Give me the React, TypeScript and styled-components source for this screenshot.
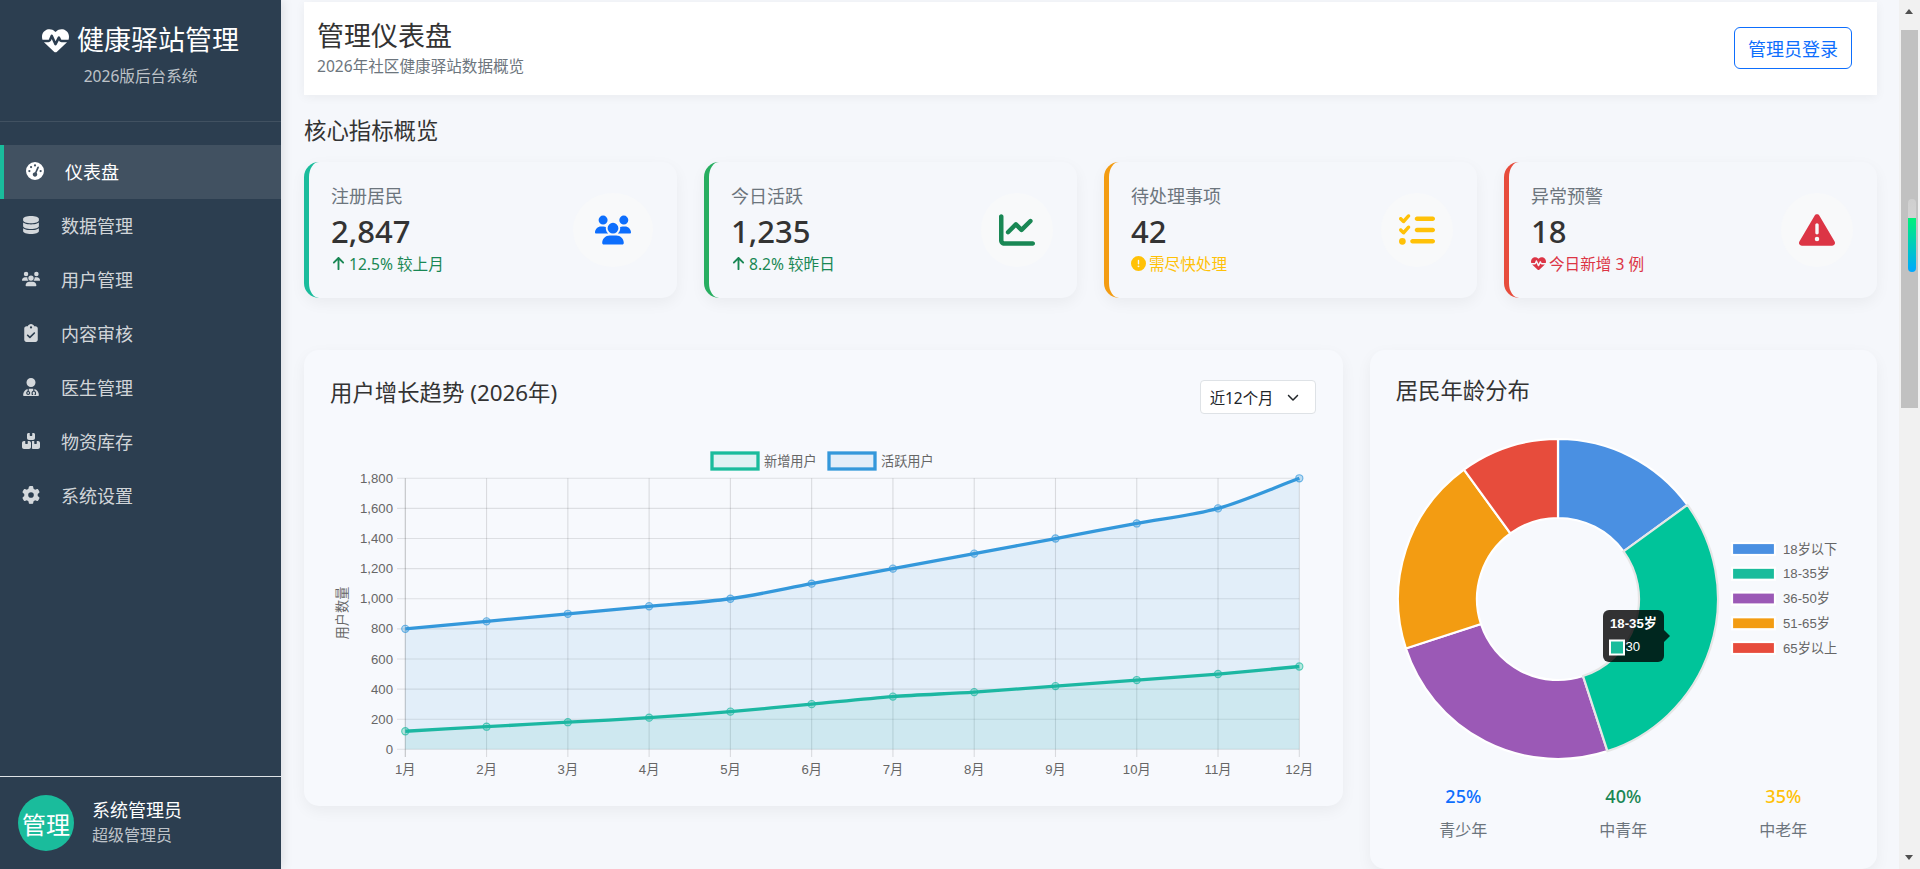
import styled, { createGlobalStyle } from 'styled-components'
import {
  FaArrowUp,
  FaBoxesStacked,
  FaChartLine,
  FaChevronDown,
  FaCircleExclamation,
  FaClipboardCheck,
  FaDatabase,
  FaGaugeHigh,
  FaGear,
  FaHeartPulse,
  FaListCheck,
  FaTriangleExclamation,
  FaUserDoctor,
  FaUsers,
} from 'react-icons/fa6'
import type { ReactNode } from 'react'

const UI_FONT = '"Noto Sans", "Noto Sans CJK SC", sans-serif'
const CHART_FONT = '"Liberation Sans", "Noto Sans CJK SC", sans-serif'

const GlobalStyle = createGlobalStyle`
  html, body {
    margin: 0;
    height: 100%;
    overflow: hidden;
    background: #f5f7fb;
    font-family: ${UI_FONT};
    color: #333;
  }
  * { box-sizing: border-box; }
`

const Page = styled.div`
  display: flex;
  height: 100vh;
  overflow: hidden;
`

const Sidebar = styled.aside`
  position: relative;
  z-index: 2;
  flex: 0 0 281px;
  display: flex;
  flex-direction: column;
  background: #2c3e50;
  color: #fff;
  box-shadow: 2px 0 10px rgba(0, 0, 0, 0.1);
`

const Brand = styled.div`
  height: 122px;
  padding-top: 22px;
  text-align: center;
  border-bottom: 1px solid rgba(255, 255, 255, 0.1);
`

const BrandTitle = styled.div`
  display: flex;
  align-items: center;
  justify-content: center;
  gap: 8px;
  height: 36px;
  font-size: 27px;
  line-height: 36px;
`

const BrandSub = styled.div`
  margin-top: 8px;
  font-size: 15.6px;
  line-height: 20px;
  color: rgba(255, 255, 255, 0.7);
`

const Nav = styled.nav`
  padding-top: 23px;
`

const NavItem = styled.a<{ $active?: boolean }>`
  display: flex;
  align-items: center;
  height: 54px;
  padding: 0 0 2px 22px;
  font-size: 18px;
  color: ${({ $active }) => ($active ? '#fff' : 'rgba(255, 255, 255, 0.8)')};
  background: ${({ $active }) => ($active ? 'rgba(255, 255, 255, 0.1)' : 'transparent')};
  border-left: ${({ $active }) => ($active ? '4px solid #1abc9c' : 'none')};
`

const NavIcon = styled.span`
  flex: 0 0 39px;
  display: flex;
  align-items: center;
  font-size: 18px;

  svg {
    width: auto;
  }
`

const Profile = styled.div`
  margin-top: auto;
  height: 93px;
  display: flex;
  align-items: center;
  gap: 18px;
  padding: 0 0 0 18px;
  border-top: 1px solid #dee2e6;
`

const Avatar = styled.div`
  flex: 0 0 56px;
  height: 56px;
  border-radius: 50%;
  background: #1abc9c;
  display: flex;
  align-items: center;
  justify-content: center;
  font-size: 24px;
`

const ProfileText = styled.div`
  margin-top: -3px;
`

const ProfileName = styled.div`
  font-size: 18px;
  line-height: 26px;
`

const ProfileRole = styled.div`
  font-size: 16px;
  line-height: 24px;
  color: rgba(255, 255, 255, 0.7);
`

const Main = styled.main`
  flex: 1;
  min-width: 0;
  padding: 2px 22px 0 23px;
`

const Topbar = styled.header`
  height: 93px;
  display: flex;
  align-items: center;
  justify-content: space-between;
  padding: 0 25px 2px 13px;
  background: #fff;
  box-shadow: 0 2px 10px rgba(0, 0, 0, 0.05);
`

const PageTitle = styled.h1`
  margin: -2px 0 0;
  font-size: 27px;
  font-weight: 400;
  line-height: 38px;
`

const PageSub = styled.div`
  font-size: 15.6px;
  line-height: 22px;
  color: #6c757d;
`

const LoginButton = styled.button`
  width: 118px;
  height: 42px;
  padding: 0;
  background: transparent;
  border: 1px solid #0d6efd;
  border-radius: 6px;
  color: #0d6efd;
  font-family: inherit;
  font-size: 18px;
`

const SectionTitle = styled.h2`
  margin: 20px 0 15px;
  font-size: 22.4px;
  font-weight: 400;
  line-height: 32px;
`

const StatGrid = styled.section`
  display: grid;
  grid-template-columns: repeat(4, 1fr);
  gap: 27px;
`

const StatCard = styled.div<{ $accent: string }>`
  height: 136px;
  display: flex;
  align-items: center;
  justify-content: space-between;
  padding: 0 24px 0 22px;
  background: #f5f7fb;
  border-left: 5px solid ${({ $accent }) => $accent};
  border-radius: 15px;
  box-shadow: 0 5px 15px rgba(0, 0, 0, 0.05);
`

const StatText = styled.div`
  margin-top: -3px;
`

const StatLabel = styled.div`
  font-size: 18px;
  line-height: 26px;
  color: #6c757d;
`

const StatValue = styled.div`
  margin-top: 2px;
  font-size: 31px;
  font-weight: 500;
  line-height: 40px;
  color: #333;
`

const StatNote = styled.div<{ $color: string }>`
  display: flex;
  align-items: center;
  gap: 3px;
  margin-top: 2px;
  font-size: 15.6px;
  line-height: 22px;
  color: ${({ $color }) => $color};

  svg {
    font-size: 15px;
  }
`

const IconBubble = styled.div<{ $color: string; $wide?: boolean }>`
  flex: 0 0 ${({ $wide }) => ($wide ? '80px' : '72px')};
  height: 74px;
  display: flex;
  align-items: center;
  justify-content: center;
  border-radius: 50%;
  background: #f8f9fa;
  color: ${({ $color }) => $color};
  font-size: 36px;

  svg {
    width: auto;
  }
`

const ChartRow = styled.section`
  display: grid;
  grid-template-columns: minmax(0, 1038fr) minmax(0, 507fr);
  gap: 27px;
  margin-top: 52px;
  align-items: start;
`

const Panel = styled.div<{ $height: number; $top: number }>`
  height: ${({ $height }) => $height}px;
  padding: ${({ $top }) => $top}px 26px 0;
  background: #f7f9fd;
  border-radius: 15px;
  box-shadow: 0 5px 15px rgba(0, 0, 0, 0.05);
`

const PanelHead = styled.div`
  display: flex;
  align-items: flex-start;
  justify-content: space-between;
`

const PanelTitle = styled.h3`
  margin: 0;
  font-size: 22.4px;
  font-weight: 400;
  line-height: 29px;
`

const RangeSelect = styled.div`
  width: 116px;
  height: 34px;
  margin: 2px 1px 0 0;
  display: flex;
  align-items: center;
  justify-content: space-between;
  padding: 0 16px 0 9px;
  background: #fff;
  border: 1px solid #dee2e6;
  border-radius: 4px;
  font-size: 15.4px;
  color: #212529;

  svg {
    font-size: 12px;
  }
`

const ChartSvg = styled.svg<{ $gap: number }>`
  display: block;
  margin-top: ${({ $gap }) => $gap}px;
  font-family: ${CHART_FONT};
  font-size: 13.2px;
  fill: #666;
`

const SplitStats = styled.div`
  display: grid;
  grid-template-columns: repeat(3, 160px);
  justify-content: center;
  margin: 8px -26px 0;
  text-align: center;
`

const SplitValue = styled.div<{ $color: string }>`
  font-size: 18px;
  font-weight: 500;
  line-height: 26px;
  color: ${({ $color }) => $color};
`

const SplitLabel = styled.div`
  margin-top: 9px;
  font-size: 16px;
  line-height: 24px;
  color: #6c757d;
`

const ScrollRail = styled.div`
  flex: 0 0 21px;
  display: flex;
  flex-direction: column;
  align-items: flex-start;
  background: #f1f1f1;
`

const RailArrow = styled.div<{ $down?: boolean }>`
  width: 0;
  height: 0;
  margin: ${({ $down }) => ($down ? 'auto 0 9px 6px' : '9px 0 16px 6px')};
  border-left: 4.5px solid transparent;
  border-right: 4.5px solid transparent;
  border-bottom: ${({ $down }) => ($down ? 'none' : '5px solid #505050')};
  border-top: ${({ $down }) => ($down ? '5px solid #505050' : 'none')};
`

const RailThumb = styled.div`
  position: relative;
  width: 17px;
  height: 378px;
  margin-left: 2px;
  background: #c1c1c1;
`

const RailGlow = styled.div`
  position: absolute;
  top: 169px;
  left: 7px;
  width: 8px;
  height: 73px;
  border-radius: 4px;
  background: linear-gradient(
    #cfcfcf 0,
    #d3d3d3 19px,
    #00f07a 19px,
    #00a8ff 100%
  );
`

type NavEntry = { label: string; icon: ReactNode; active?: boolean }

const NAV_ITEMS: NavEntry[] = [
  { label: '仪表盘', icon: <FaGaugeHigh />, active: true },
  { label: '数据管理', icon: <FaDatabase /> },
  { label: '用户管理', icon: <FaUsers /> },
  { label: '内容审核', icon: <FaClipboardCheck /> },
  { label: '医生管理', icon: <FaUserDoctor /> },
  { label: '物资库存', icon: <FaBoxesStacked /> },
  { label: '系统设置', icon: <FaGear /> },
]

const STATS = [
  { label: '注册居民', value: '2,847', accent: '#1abc9c', color: '#0d6efd', wide: true, icon: <FaUsers />, noteColor: '#198754', noteIcon: <FaArrowUp />, note: '12.5% 较上月' },
  { label: '今日活跃', value: '1,235', accent: '#27ae60', color: '#198754', icon: <FaChartLine />, noteColor: '#198754', noteIcon: <FaArrowUp />, note: '8.2% 较昨日' },
  { label: '待处理事项', value: '42', accent: '#f39c12', color: '#ffc107', icon: <FaListCheck />, noteColor: '#ffc107', noteIcon: <FaCircleExclamation />, note: '需尽快处理' },
  { label: '异常预警', value: '18', accent: '#e74c3c', color: '#dc3545', icon: <FaTriangleExclamation />, noteColor: '#dc3545', noteIcon: <FaHeartPulse />, note: '今日新增 3 例' },
]

const MONTHS = ['1月', '2月', '3月', '4月', '5月', '6月', '7月', '8月', '9月', '10月', '11月', '12月']
const NEW_USERS = [120, 150, 180, 210, 250, 300, 350, 380, 420, 460, 500, 550]
const ACTIVE_USERS = [800, 850, 900, 950, 1000, 1100, 1200, 1300, 1400, 1500, 1600, 1800]

// plot area, in page coordinates (the svg viewBox uses the same ones)
const PLOT = { left: 405.3, right: 1299.3, top: 477.3, bottom: 748.3 }
const xAt = (i: number) => PLOT.left + (i * (PLOT.right - PLOT.left)) / 11
const yAt = (v: number) => PLOT.bottom - (v / 1800) * (PLOT.bottom - PLOT.top)

type Pt = [number, number]

// same spline chart.js uses for a line with tension
const splinePath = (pts: Pt[], tension = 0.3) => {
  const controls = pts.map((p, i) => {
    const prev = pts[i - 1] ?? p
    const next = pts[i + 1] ?? p
    const d01 = Math.hypot(p[0] - prev[0], p[1] - prev[1])
    const d12 = Math.hypot(next[0] - p[0], next[1] - p[1])
    const total = d01 + d12 || 1
    const fa = (tension * d01) / total
    const fb = (tension * d12) / total
    return {
      before: [p[0] - fa * (next[0] - prev[0]), p[1] - fa * (next[1] - prev[1])],
      after: [p[0] + fb * (next[0] - prev[0]), p[1] + fb * (next[1] - prev[1])],
    }
  })
  let d = `M${pts[0][0]} ${pts[0][1]}`
  for (let i = 1; i < pts.length; i++) {
    const a = controls[i - 1].after
    const b = controls[i].before
    d += ` C${a[0]} ${a[1]} ${b[0]} ${b[1]} ${pts[i][0]} ${pts[i][1]}`
  }
  return d
}

const LineSeries = ({ data, color, rgb }: { data: number[]; color: string; rgb: string }) => {
  const pts = data.map((v, i): Pt => [xAt(i), yAt(v)])
  const line = splinePath(pts)
  return (
    <g>
      <path d={`${line} L${PLOT.right} ${PLOT.bottom} L${PLOT.left} ${PLOT.bottom} Z`} fill={`rgba(${rgb}, 0.1)`} />
      <path d={line} fill="none" stroke={color} strokeWidth={3.3} />
      {pts.map(([x, y]) => (
        <circle key={x} cx={x} cy={y} r={3.6} fill={`rgba(${rgb}, 0.3)`} stroke={`rgba(${rgb}, 0.7)`} strokeWidth={1.1} />
      ))}
    </g>
  )
}

const TrendChart = () => (
  <ChartSvg $gap={17} width={987} height={360} viewBox="330 430 987 360">
    <rect x={712} y={452} width={46} height={16} fill="rgba(26,188,156,0.1)" stroke="#1abc9c" strokeWidth={3.3} />
    <text x={764} y={465}>新增用户</text>
    <rect x={829} y={452} width={46} height={16} fill="rgba(52,152,219,0.1)" stroke="#3498db" strokeWidth={3.3} />
    <text x={881} y={465}>活跃用户</text>

    {Array.from({ length: 10 }, (_, i) => {
      const v = i * 200
      const y = yAt(v)
      return (
        <g key={v}>
          <line x1={397} x2={PLOT.right} y1={y} y2={y} stroke="rgba(0,0,0,0.1)" strokeWidth={1.1} />
          <text x={393} y={y + 4.6} textAnchor="end">{v.toLocaleString('en-US')}</text>
        </g>
      )
    })}
    {MONTHS.map((m, i) => (
      <g key={m}>
        <line x1={xAt(i)} x2={xAt(i)} y1={PLOT.top} y2={756} stroke={i === 0 ? 'rgba(0,0,0,0.22)' : 'rgba(0,0,0,0.12)'} strokeWidth={1.1} />
        <text x={xAt(i)} y={772.5} textAnchor="middle">{m}</text>
      </g>
    ))}
    <text transform="translate(347 612) rotate(-90)" textAnchor="middle">用户数量</text>

    <LineSeries data={NEW_USERS} color="#1abc9c" rgb="26,188,156" />
    <LineSeries data={ACTIVE_USERS} color="#3498db" rgb="52,152,219" />
  </ChartSvg>
)

const AGE_SLICES = [
  { label: '18岁以下', value: 15, color: '#4a90e2', swatch: '#4a90e2' },
  { label: '18-35岁', value: 30, color: '#00c49a', swatch: '#1abc9c', hover: true },
  { label: '36-50岁', value: 25, color: '#9b59b6', swatch: '#9b59b6' },
  { label: '51-65岁', value: 20, color: '#f39c12', swatch: '#f39c12' },
  { label: '65岁以上', value: 10, color: '#e74c3c', swatch: '#e74c3c' },
]

const DONUT = { cx: 1558, cy: 599, outer: 160, inner: 81 }

const polar = (r: number, pct: number): Pt => {
  const a = (pct / 100) * 2 * Math.PI
  return [DONUT.cx + r * Math.sin(a), DONUT.cy - r * Math.cos(a)]
}

const arcPath = (from: number, to: number) => {
  const { outer, inner } = DONUT
  const large = to - from > 50 ? 1 : 0
  const [ax, ay] = polar(outer, from)
  const [bx, by] = polar(outer, to)
  const [cx, cy] = polar(inner, to)
  const [dx, dy] = polar(inner, from)
  return `M${ax} ${ay} A${outer} ${outer} 0 ${large} 1 ${bx} ${by} L${cx} ${cy} A${inner} ${inner} 0 ${large} 0 ${dx} ${dy} Z`
}

const AgeChart = () => {
  let start = 0
  const arcs = AGE_SLICES.map((s) => {
    const from = start
    start += s.value
    return { ...s, d: arcPath(from, start) }
  })
  return (
    <ChartSvg $gap={20} width={454} height={350} viewBox="1396 425 454 350">
      {arcs.filter((a) => !a.hover).map((a) => (
        <path key={a.label} d={a.d} fill={a.color} stroke="#fff" strokeWidth={2.2} />
      ))}
      {arcs.filter((a) => a.hover).map((a) => (
        <path key={a.label} d={a.d} fill={a.color} stroke="#e6e6e6" strokeWidth={2.2} />
      ))}

      {AGE_SLICES.map((s, i) => {
        const y = 549 + i * 24.75
        return (
          <g key={s.label}>
            <rect x={1732} y={y - 6} width={43} height={12} fill={s.swatch} stroke="#fff" strokeWidth={2.2} />
            <text x={1783} y={y + 4.6}>{s.label}</text>
          </g>
        )
      })}

      <rect x={1603} y={610} width={61} height={52} rx={6} fill="rgba(0,0,0,0.8)" />
      <polygon points="1664,630 1670,636 1664,642" fill="rgba(0,0,0,0.8)" />
      <text x={1610} y={628} fill="#fff" fontWeight={700}>18-35岁</text>
      <rect x={1610} y={640.5} width={14} height={14} fill="#1abc9c" stroke="#fff" strokeWidth={2} />
      <text x={1625.5} y={651} fill="#fff">30</text>
    </ChartSvg>
  )
}

const App = () => (
  <Page>
    <GlobalStyle />
    <Sidebar>
      <Brand>
        <BrandTitle>
          <FaHeartPulse />
          健康驿站管理
        </BrandTitle>
        <BrandSub>2026版后台系统</BrandSub>
      </Brand>
      <Nav>
        {NAV_ITEMS.map((item) => (
          <NavItem key={item.label} $active={item.active}>
            <NavIcon>{item.icon}</NavIcon>
            {item.label}
          </NavItem>
        ))}
      </Nav>
      <Profile>
        <Avatar>管理</Avatar>
        <ProfileText>
          <ProfileName>系统管理员</ProfileName>
          <ProfileRole>超级管理员</ProfileRole>
        </ProfileText>
      </Profile>
    </Sidebar>

    <Main>
      <Topbar>
        <div>
          <PageTitle>管理仪表盘</PageTitle>
          <PageSub>2026年社区健康驿站数据概览</PageSub>
        </div>
        <LoginButton>管理员登录</LoginButton>
      </Topbar>

      <SectionTitle>核心指标概览</SectionTitle>
      <StatGrid>
        {STATS.map((s) => (
          <StatCard key={s.label} $accent={s.accent}>
            <StatText>
              <StatLabel>{s.label}</StatLabel>
              <StatValue>{s.value}</StatValue>
              <StatNote $color={s.noteColor}>
                {s.noteIcon}
                {s.note}
              </StatNote>
            </StatText>
            <IconBubble $color={s.color} $wide={s.wide}>{s.icon}</IconBubble>
          </StatCard>
        ))}
      </StatGrid>

      <ChartRow>
        <Panel $height={456} $top={28}>
          <PanelHead>
            <PanelTitle>用户增长趋势 (2026年)</PanelTitle>
            <RangeSelect>
              近12个月
              <FaChevronDown />
            </RangeSelect>
          </PanelHead>
          <TrendChart />
        </Panel>
        <Panel $height={519} $top={26}>
          <PanelTitle>居民年龄分布</PanelTitle>
          <AgeChart />
          <SplitStats>
            <div>
              <SplitValue $color="#0d6efd">25%</SplitValue>
              <SplitLabel>青少年</SplitLabel>
            </div>
            <div>
              <SplitValue $color="#198754">40%</SplitValue>
              <SplitLabel>中青年</SplitLabel>
            </div>
            <div>
              <SplitValue $color="#ffc107">35%</SplitValue>
              <SplitLabel>中老年</SplitLabel>
            </div>
          </SplitStats>
        </Panel>
      </ChartRow>
    </Main>

    <ScrollRail>
      <RailArrow />
      <RailThumb>
        <RailGlow />
      </RailThumb>
      <RailArrow $down />
    </ScrollRail>
  </Page>
)

export default App
